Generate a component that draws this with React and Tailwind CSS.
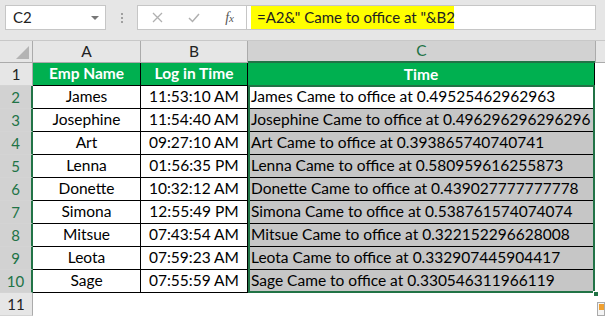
import React from "react";

const data = [
  ["James", "11:53:10 AM", "0.49525462962963"],
  ["Josephine", "11:54:40 AM", "0.496296296296296"],
  ["Art", "09:27:10 AM", "0.393865740740741"],
  ["Lenna", "01:56:35 PM", "0.580959616255873"],
  ["Donette", "10:32:12 AM", "0.439027777777778"],
  ["Simona", "12:55:49 PM", "0.538761574074074"],
  ["Mitsue", "07:43:54 AM", "0.322152296628008"],
  ["Leota", "07:59:23 AM", "0.332907445904417"],
  ["Sage", "07:55:59 AM", "0.330546311966119"],
];

const font = { fontFamily: "Lato, 'Open Sans', sans-serif" };

// row header cell on the left
function RowHead({ n, selected }) {
  return (
    <div
      className={`w-[33px] h-[23px] shrink-0 flex items-center justify-center text-[15px] border-b border-[#d4d4d4] ${
        selected
          ? "bg-[#d2d2d2] text-[#217346] border-r-2 border-r-[#217346]"
          : "bg-[#e6e6e6] text-[#222] border-r border-r-[#ababab]"
      }`}
    >
      {n}
    </div>
  );
}

export default function App() {
  return (
    <div className="w-[605px] h-[316px] overflow-hidden bg-white text-black" style={font}>
      {/* formula bar */}
      <div className="h-[41px] bg-[#e6e6e6] flex items-start pt-[5px] pl-[5px] border-b border-[#c8c8c8]">
        <div className="w-[101px] h-[25px] bg-white border border-[#c6c6c6] flex items-center justify-between pl-[7px] pr-[6px] text-[15px] text-[#222]">
          <span>C2</span>
          <span className="w-0 h-0 border-l-[4px] border-r-[4px] border-t-[4px] border-l-transparent border-r-transparent border-t-[#777]" />
        </div>
        <div className="w-[31px] h-[25px] flex flex-col items-center justify-center gap-[2px]">
          <span className="w-[2px] h-[2px] bg-[#a0a0a0]" />
          <span className="w-[2px] h-[2px] bg-[#a0a0a0]" />
          <span className="w-[2px] h-[2px] bg-[#a0a0a0]" />
        </div>
        <div className="flex h-[25px] border border-[#c6c6c6] bg-white">
          <div className="w-[109px] flex items-center justify-between pl-[14px] pr-[12px] border-r border-[#c6c6c6]">
            <svg width="11" height="11" viewBox="0 0 11 11">
              <path d="M1 1 L10 10 M10 1 L1 10" stroke="#b0b0b0" strokeWidth="1.3" />
            </svg>
            <svg width="12" height="10" viewBox="0 0 12 10">
              <path d="M1 5 L4.5 8.5 L11 1" stroke="#b0b0b0" strokeWidth="1.5" fill="none" />
            </svg>
            <span className="text-[14px] italic text-[#555]" style={{ fontFamily: "'Liberation Serif', serif" }}>
              f<span className="text-[11px]">x</span>
            </span>
          </div>
          <div className="w-[4px]" />
          <div className="w-[203px] bg-[#ffff00] flex items-center pl-[6px] text-[15px] text-[#222] whitespace-pre">
            =A2&amp;" Came to office at "&amp;B2
          </div>
          <div className="w-[141px]" />
        </div>
      </div>

      {/* column headers */}
      <div className="flex h-[22px] bg-[#e6e6e6] text-[15.5px]">
        <div className="w-[33px] shrink-0 relative border-r border-[#ababab] border-b border-b-[#ababab]">
          <svg className="absolute right-[3px] bottom-[3px]" width="13" height="13" viewBox="0 0 13 13">
            <path d="M13 0 L13 13 L0 13 Z" fill="#b4b4b4" />
          </svg>
        </div>
        <div className="w-[108px] shrink-0 flex items-center justify-center border-r border-[#ababab] border-b border-b-[#ababab] text-[#222]">A</div>
        <div className="w-[107px] shrink-0 flex items-center justify-center border-r border-[#ababab] border-b border-b-[#ababab] text-[#222]">B</div>
        <div className="w-[347px] shrink-0 flex items-center justify-center bg-[#d2d2d2] border-b-2 border-[#217346] text-[#217346]">C</div>
        <div className="flex-1 border-l border-[#ababab] border-b border-b-[#ababab]" />
      </div>

      {/* header row */}
      <div className="flex">
        <RowHead n={1} />
        <div className="w-[108px] h-[23px] shrink-0 bg-[#00b050] text-white font-bold text-[15.5px] flex items-center justify-center border-r border-b border-black">
          Emp Name
        </div>
        <div className="w-[107px] h-[23px] shrink-0 bg-[#00b050] text-white font-bold text-[15.5px] flex items-center justify-center border-r border-b border-black">
          Log in Time
        </div>
        <div className="w-[347px] h-[23px] shrink-0 bg-[#00b050] text-white font-bold text-[15.5px] flex items-center justify-center border-r border-black">
          Time
        </div>
      </div>

      {/* data rows */}
      <div className="flex">
        <div className="flex flex-col">
          {data.map((_, i) => (
            <RowHead key={i} n={i + 2} selected />
          ))}
        </div>
        <div className="flex flex-col">
          {data.map((r, i) => (
            <div key={i} className="flex">
              <div className="w-[108px] h-[23px] shrink-0 text-[15.5px] flex items-center justify-center border-r border-b border-black">
                {r[0]}
              </div>
              <div className="w-[107px] h-[23px] shrink-0 text-[15.5px] flex items-center justify-center border-r border-b border-black">
                {r[1]}
              </div>
            </div>
          ))}
        </div>
        <div className="relative flex flex-col">
          {data.map((r, i) => (
            <div
              key={i}
              className={`w-[347px] h-[23px] shrink-0 text-[15.5px] flex items-center pl-[3px] overflow-hidden whitespace-nowrap border-b border-black ${
                i === 0 ? "bg-white" : "bg-[#c6c6c6]"
              }`}
            >
              {r[0]} Came to office at {r[2]}
            </div>
          ))}
          {/* selection outline */}
          <div className="absolute inset-0 -top-[1px] border-2 border-[#217346] pointer-events-none" />
          <div className="absolute -right-[4px] -bottom-[4px] w-[6px] h-[6px] bg-[#217346] border border-white" />
        </div>
      </div>

      {/* row 11 */}
      <div className="flex relative">
        <RowHead n={11} />
        <div className="absolute right-0 top-[9px] w-[8px] h-[14px] bg-[#f4f4f4] border border-[#aaa] overflow-hidden">
          <div className="w-[6px] h-[6px] bg-[#f0a030] m-[1px]" />
        </div>
      </div>
    </div>
  );
}
